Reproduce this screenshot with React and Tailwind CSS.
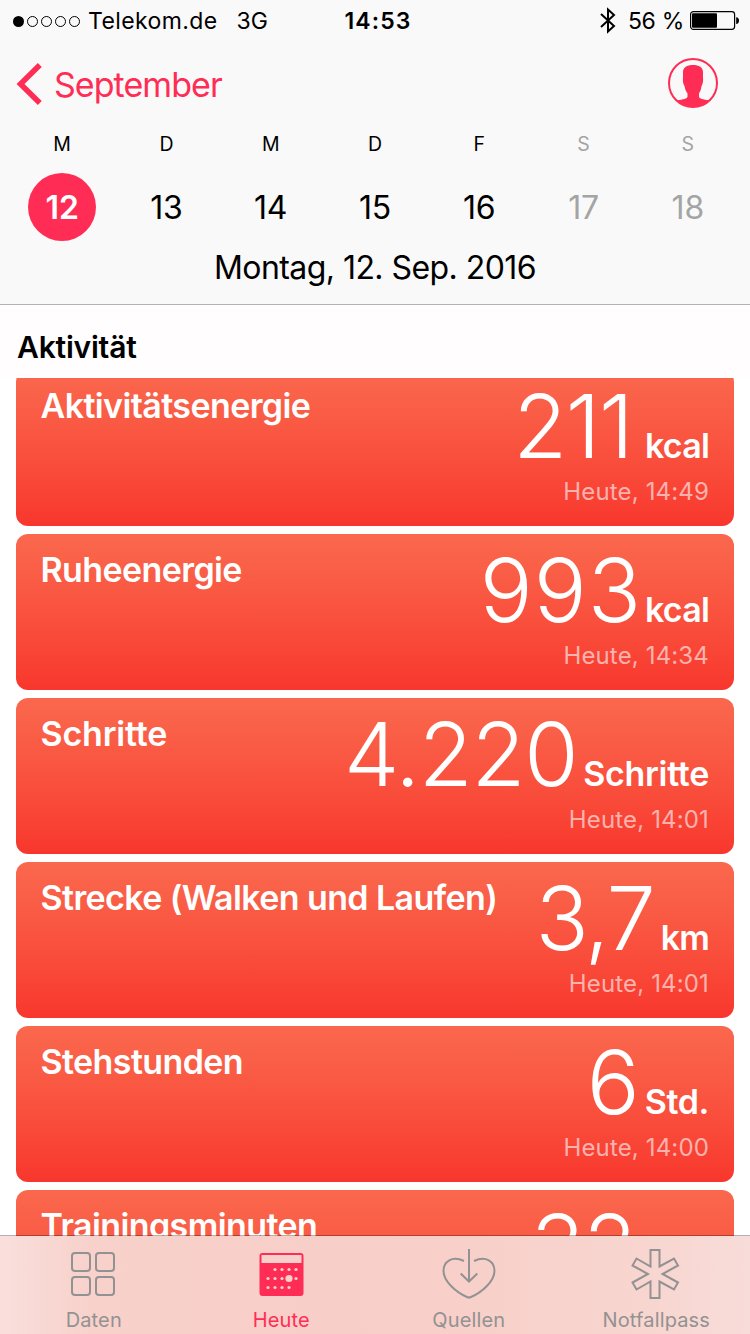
import React from 'react';
import clsx from 'clsx';

const DAYS = [
    { letter: 'M', number: 12, selected: true },
    { letter: 'D', number: 13 },
    { letter: 'M', number: 14 },
    { letter: 'D', number: 15 },
    { letter: 'F', number: 16 },
    { letter: 'S', number: 17, weekend: true },
    { letter: 'S', number: 18, weekend: true },
];

const ENTRIES = [
    { title: 'Aktivitätsenergie', value: '211', unit: 'kcal', time: '14:49', valueClass: 'mr-[13px] tracking-[-1.5px]' },
    { title: 'Ruheenergie', value: '993', unit: 'kcal', time: '14:34', valueClass: 'mr-[3px] tracking-[1px]' },
    { title: 'Schritte', value: '4.220', unit: 'Schritte', time: '14:01', titleClass: 'tracking-[-0.2px]', valueClass: 'mr-[6px] tracking-[-1.3px]', unitClass: 'tracking-[-0.3px]' },
    { title: 'Strecke (Walken und Laufen)', value: '3,7', unit: 'km', time: '14:01', valueClass: 'mr-[7px] tracking-[-2px]' },
    { title: 'Stehstunden', value: '6', unit: 'Std.', time: '14:00', valueClass: 'mr-[7px] tracking-[-2px]', unitClass: 'tracking-[-0.4px]' },
    { title: 'Trainingsminuten', value: '32', unit: 'Min.', time: '14:00', valueClass: 'mr-1 tracking-[-1px]' },
];

const BluetoothIcon = () => (
    <svg width="16" height="28" viewBox="0 0 16 28" fill="none" stroke="currentColor" strokeWidth="2">
        <path d="M1 7L14 19L8 24.500V2.500L14 8L1 20" />
    </svg>
);

const BatteryIcon = () => (
    <svg width="50" height="20" viewBox="0 0 50 20">
        <rect x="0.6" y="0.6" width="44" height="17.8" rx="2.8" fill="none" stroke="currentColor" strokeWidth="1.2" />
        <rect x="2" y="2.2" width="25" height="14.6" rx="1" fill="currentColor" />
        <path d="M46.2 6.2c1.8 0 2.8 1.4 2.8 3.4s-1 3.4-2.8 3.4z" fill="currentColor" />
    </svg>
);

const ProfileIcon = () => (
    <svg width="50" height="50" viewBox="0 0 50 50">
        <circle cx="25" cy="25" r="24" fill="none" stroke="currentColor" strokeWidth="2" />
        <path
            d="M25 7C19 7 15 9.500 15 14V20.500C14.600 21.500 15 25.500 16 27C16.800 28.200 16.800 30 17.500 32C18 33.500 19.300 34.500 19.500 35.500V38.500C19.500 41 15 41.300 9 42.500A24 24 0 0 0 41 42.500C35.500 41.300 31 41 31 38.500V35.500C31.200 34.500 32.300 33.500 32.700 32C33.300 30 33.300 28.200 34 27C35 25.500 35.300 21.500 35 20.500V14C35 9.500 31 7 25 7Z"
            fill="currentColor"
        />
    </svg>
);

const DataIcon = () => (
    <svg width="56" height="56" viewBox="0 0 56 56" fill="none" stroke="currentColor" strokeWidth="2">
        <rect x="6" y="7" width="18" height="18" rx="3" />
        <rect x="30" y="7" width="18" height="18" rx="3" />
        <rect x="6" y="31" width="18" height="18" rx="3" />
        <rect x="30" y="31" width="18" height="18" rx="3" />
    </svg>
);

const DOTS = [
    [22, 23.5], [29, 23.5], [36, 23.5], [43, 23.5],
    [15, 32.5], [22, 32.5], [29, 32.5], [43, 32.5],
    [15, 41.5], [22, 41.5], [29, 41.5], [36, 41.5],
];

const TodayIcon = () => (
    <svg width="56" height="56" viewBox="0 0 56 56">
        <rect x="6.5" y="7" width="44" height="43" rx="3" fill="currentColor" />
        <rect x="8.5" y="9" width="40" height="8" fill="#f8d0cb" />
        {DOTS.map(([x, y]) => (
            <circle key={`${x}-${y}`} cx={x} cy={y} r="1.6" fill="#f8d0cb" />
        ))}
        <circle cx="36" cy="32.5" r="3.6" fill="#f8d0cb" />
    </svg>
);

const SourcesIcon = () => (
    <svg width="56" height="56" viewBox="0 0 56 56" fill="none" stroke="currentColor" strokeWidth="2">
        <path d="M23 15C11 9.500 2.500 15.500 2.500 25C2.500 35 15 46.500 26 51Q28 52 30 51C41 46.500 53.500 35 53.500 25C53.500 15.500 45 9.500 33 15" />
        <path d="M28 3V35.500M19.700 27.500L28 35.500L36.300 27.500" />
    </svg>
);

const MedicalIcon = () => (
    <svg width="56" height="56" viewBox="0 0 56 56" fill="none" stroke="currentColor" strokeWidth="2">
        <path d="M22.500 4H31.500V20.500L46 12.500L50 19.500L34.500 28L50 36.500L46 43.500L31.500 35.500V52H22.500V35.500L8.500 43.500L4.500 36.500L20 28L4.500 19.500L8.500 12.500L22.500 20.500Z" />
    </svg>
);

const TABS = [
    { label: 'Daten', Icon: DataIcon },
    { label: 'Heute', Icon: TodayIcon, active: true },
    { label: 'Quellen', Icon: SourcesIcon },
    { label: 'Notfallpass', Icon: MedicalIcon },
];

const StatusBar = () => (
    <div className="grid h-10 grid-cols-[1fr_auto_1fr] items-center pl-[13px] pr-[10px] pt-[2px] text-[23px]">
        <div className="flex items-center">
            <div className="flex gap-[3px]">
                <span className="size-[11px] rounded-full bg-black" />
                <span className="size-[11px] rounded-full border border-black" />
                <span className="size-[11px] rounded-full border border-black" />
                <span className="size-[11px] rounded-full border border-black" />
                <span className="size-[11px] rounded-full border border-black" />
            </div>
            <span className="ml-2 tracking-[0.4px]">Telekom.de</span>
            <span className="ml-[19px]">3G</span>
        </div>
        <span className="pl-[3px] font-semibold tracking-[1.1px]">14:53</span>
        <div className="flex items-center justify-end">
            <BluetoothIcon />
            <span className="ml-3 mr-[6px] tracking-[-0.3px]">56 %</span>
            <BatteryIcon />
        </div>
    </div>
);

const DayColumn = ({ letter, number, selected, weekend }) => (
    <div className={clsx('flex flex-1 flex-col items-center', weekend && 'text-[#a4a4a4]')}>
        <span className="text-[19.5px] leading-6">{letter}</span>
        <span
            className={clsx(
                'mt-[17px] flex size-[68px] items-center justify-center rounded-full pt-px text-[32px] tracking-[-0.2px]',
                selected && 'bg-[#ff2d55] font-semibold text-white'
            )}
        >
            {number}
        </span>
    </div>
);

const EntryCard = ({
    title,
    value,
    unit,
    time,
    valueClass,
    titleClass = 'tracking-[-0.6px]',
    unitClass = 'tracking-[-0.8px]',
}) => (
    <div className="flex h-[156px] shrink-0 justify-between rounded-xl bg-linear-to-b from-[#fa684e] to-[#f8362d] pl-[24.5px] pr-[25px] text-white first:-mt-2">
        <h3 className={clsx('whitespace-nowrap pt-4 text-[34px] font-semibold leading-10', titleClass)}>{title}</h3>
        <div className="flex flex-col items-end pt-3">
            <div className="flex items-baseline">
                <span className={clsx('text-[88px] font-light leading-[88px]', valueClass)}>{value}</span>
                <span className={clsx('text-[34px] font-semibold leading-10', unitClass)}>{unit}</span>
            </div>
            <span className="mt-[6px] text-[24px] leading-8 tracking-[0.15px] text-white/60">Heute, {time}</span>
        </div>
    </div>
);

const App = () => {
    return (
        <div className="flex h-[1334px] w-[750px] flex-col overflow-hidden bg-white font-['Inter',sans-serif] text-black">
            <header className="h-[305px] shrink-0 border-b border-[#b2b2b2] bg-[#f9f9f9]">
                <StatusBar />
                <div className="flex h-[86px] items-center justify-between pl-4 pr-8 text-[#ff2d55]">
                    <button type="button" className="flex items-center pt-px">
                        <svg width="27" height="42" viewBox="0 0 27 42" fill="none" stroke="currentColor" strokeWidth="5.5">
                            <path d="M23.800 2L4.500 21L23.800 40" />
                        </svg>
                        <span className="ml-[11px] pt-[2px] text-[34px] tracking-[-0.95px]">September</span>
                    </button>
                    <ProfileIcon />
                </div>
                <div className="flex px-[10px] pt-[6px]">
                    {DAYS.map((day) => (
                        <DayColumn key={day.number} {...day} />
                    ))}
                </div>
                <p className="mt-[7px] text-center text-[32px] leading-10 tracking-[-0.55px]">Montag, 12. Sep. 2016</p>
            </header>

            <h2 className="h-[73px] shrink-0 bg-[#fffdfd] pl-[17px] pt-[22px] text-[30px] font-semibold leading-10 tracking-[-0.2px]">
                Aktivität
            </h2>

            <main className="flex h-[858px] shrink-0 flex-col gap-2 overflow-hidden px-4">
                {ENTRIES.map((entry) => (
                    <EntryCard key={entry.title} {...entry} />
                ))}
            </main>

            <nav className="relative -mt-px flex h-[99px] shrink-0 border-t border-black/30 bg-[linear-gradient(to_right,#f9dfdc,#f8d1cb_90px,#f8cec8_320px,#f8cfc9_450px,#f8d5cf_640px,#f8dcd9)] bg-clip-padding">
                {TABS.map(({ label, Icon, active }) => (
                    <button
                        key={label}
                        type="button"
                        className={clsx('flex flex-1 flex-col items-center pt-[10px]', active ? 'text-[#ff2d55]' : 'text-[#929292]')}
                    >
                        <Icon />
                        <span className="mt-[6px] text-[20px] leading-6 tracking-[0.15px]">{label}</span>
                    </button>
                ))}
            </nav>
        </div>
    );
};

export default App;
